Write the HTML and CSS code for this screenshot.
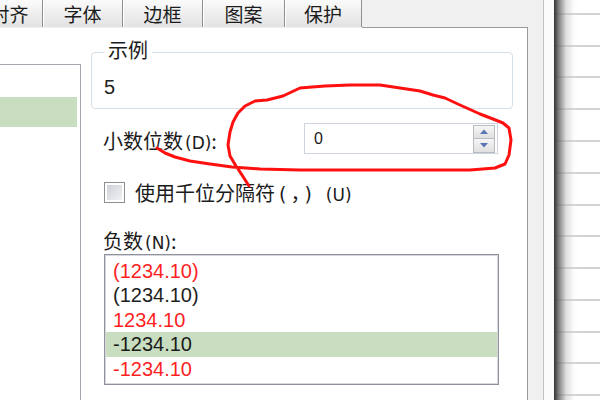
FILE: index.html
```html
<!DOCTYPE html>
<html lang="zh-CN">
<head>
<meta charset="utf-8">
<title>设置单元格格式</title>
<link rel="stylesheet" href="styles.css">
</head>
<body>
<div class="screen">
  <div class="dialog">
    <div class="tabs">
      <div class="tab tab-first">对齐</div>
      <div class="tab">字体</div>
      <div class="tab">边框</div>
      <div class="tab tab-wide">图案</div>
      <div class="tab tab-last">保护</div>
      <div class="tab-fill"></div>
    </div>
    <div class="panel">
      <div class="cat-list"><div class="cat-sel"></div></div>
      <div class="options">
        <fieldset class="sample">
          <legend>示例</legend>
          <div class="sample-val">5</div>
        </fieldset>
        <div class="row-dec">
          <span class="lbl lbl-dec">小数位数<span class="acc">(D)</span>:</span>
          <div class="spin-input">
            <span class="spin-val">0</span>
            <div class="spin">
              <span class="spin-btn"><svg width="20" height="12" viewBox="0 0 20 12"><polygon points="6,8 14,8 10,3.5" fill="#5a74b4"/></svg></span>
              <span class="spin-btn"><svg width="20" height="12" viewBox="0 0 20 12"><polygon points="6,4 14,4 10,8.5" fill="#5a74b4"/></svg></span>
            </div>
          </div>
        </div>
        <div class="row-check">
          <span class="checkbox"></span>
          <span class="lbl">使用千位分隔符<span class="paren">(</span>，<span class="paren">)</span><span class="acc acc-u">(U)</span></span>
        </div>
        <div class="lbl neg-label">负数<span class="acc">(N)</span>:</div>
        <ul class="neg-list">
          <li class="red">(1234.10)</li>
          <li>(1234.10)</li>
          <li class="red">1234.10</li>
          <li class="sel">-1234.10</li>
          <li class="red">-1234.10</li>
        </ul>
      </div>
    </div>
  </div>
  <div class="gap"></div>
  <div class="sheet"></div>
  <svg class="annot" width="600" height="400" viewBox="0 0 600 400">
    <path d="M157,148 L165,153 L175,157 L190,161 L210,164 L232,167 L260,169 L300,170 L400,170 L470,170 L495,168 L505,164 L509,155 L511,140 L509,128 L503,123 L493,119 L480,114 L460,105 L445,98 L433,95 L420,91 L400,88 L380,85 L350,85 L325,86 L300,88 L283,96 L267,100 L255,101 L245,106 L238,113 L233,122 L230,132 L228,145 L230,156 L236,166 L242,175 L249,186" fill="none" stroke="#ff1010" stroke-width="3" stroke-linejoin="round" stroke-linecap="round"/>
  </svg>
</div>
</body>
</html>
```
FILE: styles.css
```css
html, body {
  margin: 0;
  padding: 0;
}
body {
  width: 600px;
  height: 400px;
  overflow: hidden;
  background: #ffffff;
  font-family: "Noto Sans CJK SC", "Liberation Sans", sans-serif;
  color: #1b1b1b;
}
.screen {
  position: relative;
  display: flex;
  width: 600px;
  height: 400px;
}
.dialog {
  width: 544px;
  flex: none;
  display: flex;
  flex-direction: column;
  background: #f0f0f0;
  border-right: 1px solid #c2c2c2;
  box-sizing: border-box;
  overflow: hidden;
}
.tabs {
  display: flex;
  align-items: flex-start;
  height: 28px;
  width: 528px;
  flex: none;
}
.tab {
  height: 27px;
  box-sizing: border-box;
  width: 80px;
  flex: none;
  border-right: 1px solid #8f9092;
  box-shadow: inset 1px 0 0 #ffffff;
  background: linear-gradient(#fbfbfb, #ececec 60%, #e2e2e2);
  font-size: 19px;
  line-height: 27px;
  text-align: center;
  white-space: nowrap;
}
.tab-first {
  width: 66px;
  margin-left: -23px;
}
.tab-wide {
  width: 82px;
}
.tab-last {
  width: 77px;
}
.tab-fill {
  flex: 1;
  height: 28px;
  box-sizing: border-box;
  border-bottom: 1px solid #9a9a9a;
}
.panel {
  width: 528px;
  flex: 1;
  display: flex;
  background: #ffffff;
  border-right: 1px solid #9a9a9a;
  box-sizing: border-box;
}
.cat-list {
  width: 81px;
  margin-top: 36px;
  border-top: 1px solid #a4a7ad;
  border-right: 1px solid #a4a7ad;
  box-sizing: border-box;
  flex: none;
}
.cat-sel {
  margin-top: 32px;
  margin-right: 3px;
  height: 30px;
  background: #c9dec0;
}
.options {
  margin-left: 10px;
  width: 422px;
  display: flex;
  flex-direction: column;
}
.sample {
  margin: 13px 0 0 0;
  padding: 0 0 0 12px;
  height: 68px;
  box-sizing: border-box;
  border: 1px solid #d6dfe6;
  border-radius: 4px;
  min-width: 0;
}
.sample legend {
  padding: 0 4px 4px 4px;
  font-size: 20px;
  line-height: 18px;
}
.sample-val {
  margin-top: 12px;
  font-family: "Liberation Sans", sans-serif;
  font-size: 20px;
  line-height: 24px;
  color: #222;
}
.lbl {
  font-size: 20px;
  line-height: 24px;
  white-space: nowrap;
}
.acc {
  font-family: "DejaVu Sans", sans-serif;
  font-size: 17px;
  line-height: 1;
  margin-left: 2px;
}
.acc-u {
  margin-left: 10px;
}
.paren {
  font-family: "DejaVu Sans", sans-serif;
  font-size: 19px;
  line-height: 1;
  margin: 0 4px;
}
.row-dec {
  margin-top: 14px;
  display: flex;
  align-items: center;
  height: 31px;
}
.lbl-dec {
  width: 213px;
  padding-left: 12px;
  box-sizing: border-box;
  padding-top: 4px;
}
.spin-input {
  width: 194px;
  height: 31px;
  box-sizing: border-box;
  border: 1px solid #cdd4dc;
  display: flex;
  align-items: center;
  justify-content: space-between;
  padding: 0 2px 0 9px;
}
.spin-val {
  font-family: "Liberation Sans", sans-serif;
  font-size: 16px;
  color: #1b1b1b;
}
.spin {
  display: flex;
  flex-direction: column;
  width: 22px;
  height: 28px;
}
.spin-btn {
  flex: 1;
  display: flex;
  align-items: center;
  justify-content: center;
  border: 1px solid #b8bbc1;
  background: linear-gradient(#f6f6f6, #e0e0e0);
}
.spin-btn + .spin-btn {
  border-top: none;
}
.row-check {
  margin-top: 28px;
  display: flex;
  align-items: center;
  height: 21px;
  padding-left: 13px;
}
.checkbox {
  width: 21px;
  height: 21px;
  box-sizing: border-box;
  border: 1px solid #8e8f91;
  background: linear-gradient(135deg, #c9cdd5, #f6f6f7);
  box-shadow: inset 0 0 0 2px #ffffff;
  margin-right: 10px;
  flex: none;
}
.neg-label {
  margin-top: 26px;
  padding-left: 12px;
  height: 24px;
}
.neg-list {
  margin: 1px 0 0 13px;
  padding: 4px 1px 0 1px;
  list-style: none;
  width: 395px;
  height: 131px;
  box-sizing: border-box;
  border: 1px solid #8e939b;
  box-shadow: inset 0 0 0 1px #d6d8dd;
}
.neg-list li {
  height: 24.4px;
  line-height: 24.4px;
  padding-left: 7px;
  font-family: "Liberation Sans", sans-serif;
  font-size: 20px;
  color: #1e1e1e;
}
.neg-list li.red {
  color: #ff1f1f;
}
.neg-list li.sel {
  background: #c9dec0;
  color: #1a1a1a;
}
.gap {
  width: 10px;
  flex: none;
  background: #fbfbfb;
}
.sheet {
  flex: 1;
  background-image:
    linear-gradient(to right, rgba(50,50,50,1) 0, rgba(110,110,110,0.85) 5px, rgba(190,190,190,0.5) 12px, rgba(240,240,240,0.15) 20px, rgba(255,255,255,0) 26px),
    repeating-linear-gradient(to bottom, #ffffff 0, #ffffff 13px, #d2d2d2 13px, #d2d2d2 15px, #ffffff 15px, #ffffff 31.75px);
}
.annot {
  position: absolute;
  left: 0;
  top: 0;
  pointer-events: none;
}
```
